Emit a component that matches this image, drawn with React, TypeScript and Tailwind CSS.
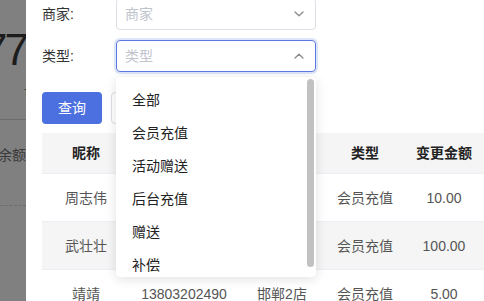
import React from "react";

const options = ["全部", "会员充值", "活动赠送", "后台充值", "赠送", "补偿", "其他"];

const rows = [
  { name: "周志伟", phone: "13931012345", store: "邯郸1店", type: "会员充值", amount: "10.00" },
  { name: "武壮壮", phone: "15830078321", store: "邯郸2店", type: "会员充值", amount: "100.00" },
  { name: "靖靖", phone: "13803202490", store: "邯郸2店", type: "会员充值", amount: "5.00" },
];

const cols = "grid grid-cols-[88px_108px_88px_78px_80px] items-center text-center";

function Chevron({ up }: { up?: boolean }) {
  return (
    <svg width="10" height="6" viewBox="0 0 10 6" className="shrink-0">
      <path
        d={up ? "M1 5L5 1.2L9 5" : "M1 1L5 4.8L9 1"}
        fill="none"
        stroke="#8a8a8a"
        strokeWidth="1.3"
        strokeLinecap="round"
        strokeLinejoin="round"
      />
    </svg>
  );
}

function Backdrop() {
  return (
    <div className="w-[26px] shrink-0 overflow-hidden bg-[#808080] flex flex-col">
      <div className="mt-[24px] flex justify-end h-[52px] items-center">
        <span className="whitespace-nowrap text-[44px] leading-none text-[#1c1c1c] tracking-[-3px]">177</span>
      </div>
      <div className="mt-[12px] pl-[24px] whitespace-nowrap text-sm leading-[14px] text-[#2a2a2a]">可用余额</div>
      <div className="mt-[17px] border-t border-[#6c6c6c]" />
      <div className="mt-[28px] flex justify-end h-[14px] items-center">
        <span className="whitespace-nowrap text-sm text-[#3a3a3a]">剩余额</span>
      </div>
      <div className="mt-[43px] border-t border-dashed border-[#6e6e6e]" />
    </div>
  );
}

export default function App() {
  return (
    <div className="flex h-[301px] w-[484px] overflow-hidden font-['Liberation_Sans','Noto_Sans_CJK_SC',sans-serif] text-sm">
      <Backdrop />
      <div className="flex-1 overflow-hidden bg-white pl-4">
        <div className="-mt-[2px] flex flex-col">
          <div className="flex h-8 items-center">
            <label className="w-[74px] text-[#333]">商家:</label>
            <div className="flex h-8 w-[200px] items-center justify-between rounded-[4px] border border-[#dcdfe6] pl-2 pr-[11px] text-[#c0c4cc]">
              <span>商家</span>
              <Chevron />
            </div>
          </div>

          <div className="mt-[10px] flex h-8 items-center">
            <label className="w-[74px] text-[#333]">类型:</label>
            <div className="relative">
              <div className="flex h-8 w-[200px] items-center justify-between rounded-[4px] border border-[#5a79e2] pl-2 pr-[11px] text-[#c0c4cc] shadow-[0_0_0_2px_rgba(77,112,224,0.18)]">
                <span>类型</span>
                <Chevron up />
              </div>
              <div className="absolute left-0 top-[37px] z-10 h-[200px] w-[200px] overflow-hidden rounded-[4px] bg-white pt-[6px] shadow-[0_2px_12px_rgba(0,0,0,0.12)]">
                {options.map((o) => (
                  <div key={o} className="flex h-[33px] items-center px-4 text-[#222]">
                    {o}
                  </div>
                ))}
                <div className="absolute right-[2px] top-[2px] h-[188px] w-[7px] rounded-full bg-[#c1c1c1]" />
              </div>
            </div>
          </div>

          <div className="mt-[20px] flex gap-[9px]">
            <button className="h-8 w-[60px] rounded-[4px] bg-[#4d70e0] text-white">查询</button>
            <button className="h-8 w-[60px] rounded-[4px] border border-[#dcdfe6] bg-white text-[#606266]">重置</button>
          </div>

          <div className="mt-[9px] w-[442px]">
            <div className={`${cols} h-[41px] border-b border-[#ebeef5] bg-[#f5f5f5] font-bold text-[#222]`}>
              <div>昵称</div>
              <div>手机号</div>
              <div>门店</div>
              <div>类型</div>
              <div>变更金额</div>
            </div>
            {rows.map((r, i) => (
              <div
                key={r.name}
                className={`${cols} h-[48px] border-b border-[#ebeef5] text-[#555] ${i % 2 === 1 ? "bg-[#f5f5f5]" : "bg-white"}`}
              >
                <div>{r.name}</div>
                <div>{r.phone}</div>
                <div>{r.store}</div>
                <div>{r.type}</div>
                <div>{r.amount}</div>
              </div>
            ))}
          </div>
        </div>
      </div>
    </div>
  );
}
